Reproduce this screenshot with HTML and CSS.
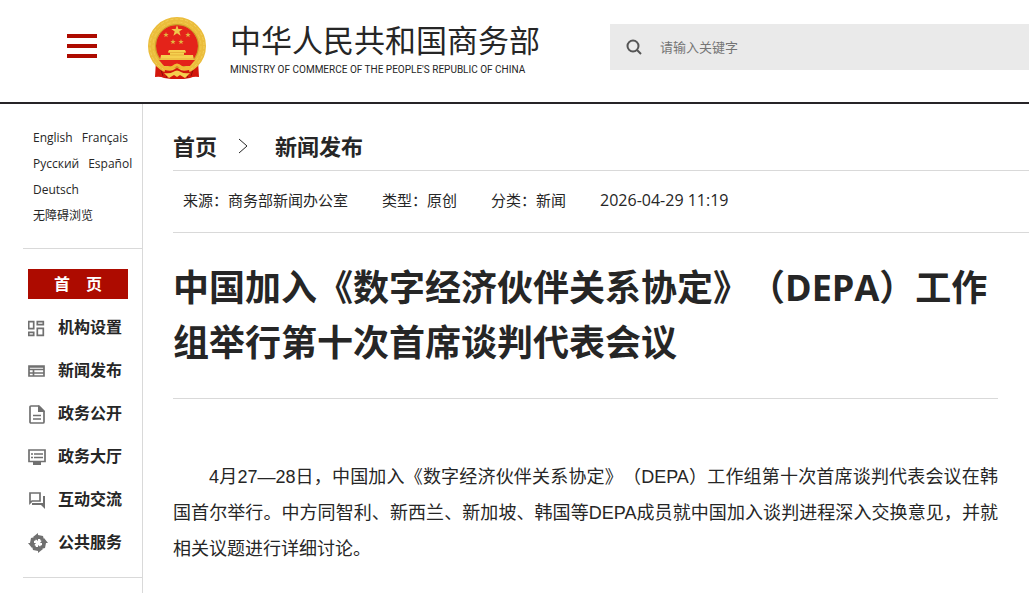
FILE: index.html
```html
<!DOCTYPE html>
<html lang="zh-CN">
<head>
    <meta charset="utf-8">
    <title>中国加入《数字经济伙伴关系协定》（DEPA）工作组举行第十次首席谈判代表会议</title>
    <link rel="stylesheet" href="styles.css">
</head>
<body>
<header class="header">
    <button class="menu-btn" type="button" aria-label="菜单"><span></span><span></span><span></span></button>
    <a class="brand" href="#">
        <svg class="emblem" viewBox="0 0 58 62" aria-hidden="true">
            <path d="M8 44L7 60Q12 59 16 61L23 62H36L42 61Q46 59 51 60L50 44Z" fill="#d3170c"/>
            <path d="M11 47L15 59M47 47L43 59M20 57L18 61M38 57L40 61" stroke="#8f0d06" stroke-width="1"/>
            <circle cx="29" cy="29" r="25" fill="#e4231a" stroke="#ebbd3c" stroke-width="8"/>
            <circle cx="29" cy="29" r="27" fill="none" stroke="#f3d05c" stroke-width="1" stroke-dasharray="3 2"/>
            <circle cx="29" cy="29" r="24" fill="none" stroke="#f2ca4c" stroke-width="1" stroke-dasharray="4 2"/>
            <circle cx="29" cy="29" r="21.500" fill="none" stroke="#b98a1c" stroke-width=".7"/>
            <path d="M29 8l1.400 4h4.300l-3.400 2.600 1.300 4.100-3.600-2.500-3.600 2.500 1.300-4.100-3.400-2.600h4.300z" fill="#f0c84c"/>
            <path id="star" d="M18 15l.7 2h2l-1.600 1.300.6 2-1.700-1.200-1.700 1.200.6-2-1.600-1.300h2z" fill="#e3b540"/>
            <use href="#star" x="22"/>
            <use href="#star" x="7" y="7"/>
            <use href="#star" x="15" y="7"/>
            <path d="M21 33h16l1 2-2 1v2h9l1 5H12l1-5h9v-2l-2-1z" fill="#f5d04f"/>
            <path d="M20 35.500h18M22 38h14M10 42h38" stroke="#dfa830" stroke-width=".7"/>
            <path d="M11 43h36l-5 6H16z" fill="#e4231a"/>
            <path d="M14 48Q20 52 24 49Q29 44 34 49Q38 52 44 48L42 53Q35 54 32 51Q29 48 26 51Q23 54 16 53Z" fill="#f0bd35"/>
            <path d="M17 53Q24 55 27 52Q29 50 31 52Q34 55 41 53L42 57H16Z" fill="#d3170c"/>
            <path d="M16 56Q22 57 25 55Q29 52 33 55Q36 57 42 56L37 61L32 58L29 60L26 58L21 61Z" fill="#f4cf4e"/>
        </svg>
        <span class="brand-text">
            <span class="brand-cn">中华人民共和国商务部</span>
            <span class="brand-en">MINISTRY OF COMMERCE OF THE PEOPLE'S REPUBLIC OF CHINA</span>
        </span>
    </a>
    <form class="search">
        <button class="search-btn" type="button" aria-label="搜索">
            <svg viewBox="0 0 16 16"><circle cx="7" cy="7" r="5.500"/><path d="M11 11l4 4"/></svg>
        </button>
        <input type="text" placeholder="请输入关键字" aria-label="请输入关键字">
    </form>
</header>

<div class="page">
    <aside class="sidebar">
        <div class="langs">
            <a href="#">English</a>
            <a href="#">Français</a>
            <a href="#">Русский</a>
            <a href="#">Español</a>
            <a href="#">Deutsch</a>
            <a href="#">无障碍浏览</a>
        </div>
        <nav class="nav">
            <a class="nav-home" href="#">首&emsp;页</a>
            <a class="nav-item" href="#">
                <svg viewBox="0 0 20 20"><path class="line" d="M.7 3.700h5v7h-5zM9.300 3.700h6v3h-6zM.7 14.300h5v3h-5zM9.300 10.300h6v7h-6z"/></svg>
                机构设置
            </a>
            <a class="nav-item" href="#">
                <svg viewBox="0 0 20 20"><path class="line" d="M1 5h15v10H1zM1 8.500h15M1 12h15M5.500 8v7M1 6h15"/></svg>
                新闻发布
            </a>
            <a class="nav-item" href="#">
                <svg viewBox="0 0 20 20"><path class="line" d="M3 2h8l5 5v11q0 1-1 1H3q-1 0-1-1V3q0-1 1-1z"/><path d="M10 1l7 7h-7z"/><path class="line" d="M5 11.500h8M5 15h8"/></svg>
                政务公开
            </a>
            <a class="nav-item" href="#">
                <svg viewBox="0 0 20 20"><path class="line" d="M1 3h16v11.500H1zM3 7h2M6 7h9M3 10.500h2M6 10.500h9"/><path d="M5 15h8v3H5z"/></svg>
                政务大厅
            </a>
            <a class="nav-item" href="#">
                <svg viewBox="0 0 20 20"><path class="line" d="M2 3h10v8H4l-2 2z"/><path d="M15 6h2v13l-4-4H4v-2h11z"/></svg>
                互动交流
            </a>
            <a class="nav-item" href="#">
                <svg viewBox="0 0 20 20">
                    <path id="blade" d="M5 4L10 0V2L15 3L16 7L13 8L12 6L10 6V8Z"/>
                    <use href="#blade" transform="rotate(90 10 10)"/>
                    <use href="#blade" transform="rotate(180 10 10)"/>
                    <use href="#blade" transform="rotate(270 10 10)"/>
                </svg>
                公共服务
            </a>
        </nav>
    </aside>

    <main class="content">
        <div class="crumbs">
            <a href="#">首页</a>
            <svg viewBox="0 0 10 16" aria-hidden="true"><path d="M1 1l8 7-8 7"/></svg>
            <a href="#">新闻发布</a>
        </div>
        <div class="meta">
            <span>来源：商务部新闻办公室</span>
            <span>类型：原创</span>
            <span>分类：新闻</span>
            <time>2026-04-29 11:19</time>
        </div>
        <article class="article">
            <h1>中国加入《数字经济伙伴关系协定》（DEPA）工作组举行第十次首席谈判代表会议</h1>
            <p>4月27—28日，中国加入《数字经济伙伴关系协定》（DEPA）工作组第十次首席谈判代表会议在韩国首尔举行。中方同智利、新西兰、新加坡、韩国等DEPA成员就中国加入谈判进程深入交换意见，并就相关议题进行详细讨论。</p>
        </article>
    </main>
</div>
</body>
</html>
```
FILE: styles.css
```css
* {
    box-sizing: border-box;
}
body {
    margin: 0;
    background: #fff;
    color: #262626;
    font-family: "Open Sans", "Noto Sans CJK SC", sans-serif;
    text-spacing-trim: space-all;
}
a {
    color: inherit;
    text-decoration: none;
}
button {
    padding: 0;
    border: 0;
    background: none;
    cursor: pointer;
}

/* header */
.header {
    display: grid;
    grid-template-columns: 30px 411px 1fr;
    column-gap: 51px;
    align-items: center;
    height: 104px;
    padding: 0 0 8px 67px;
    border-bottom: 2px solid #262427;
}
.menu-btn {
    display: flex;
    flex-direction: column;
    gap: 6px;
    padding-bottom: 2px;
}
.menu-btn span {
    width: 30px;
    height: 4px;
    background: #ad0b00;
}
.brand {
    display: flex;
    align-items: center;
    gap: 24px;
    padding-top: 2px;
    white-space: nowrap;
}
.emblem {
    flex: none;
    width: 58px;
    height: 62px;
}
.brand-text {
    display: flex;
    flex-direction: column;
}
.brand-cn {
    font-size: 31px;
    line-height: 44px;
}
.brand-en {
    font-family: Roboto, "Liberation Sans", sans-serif;
    font-size: 10px;
    line-height: 16px;
}
.search {
    display: flex;
    align-items: center;
    height: 46px;
    padding-left: 16px;
    background: #eaeaea;
}
.search-btn {
    width: 16px;
    height: 16px;
}
.search-btn svg {
    display: block;
    fill: none;
    stroke: #555;
    stroke-width: 2;
}
.search input {
    flex: 1;
    min-width: 0;
    height: 46px;
    padding: 0 18px;
    border: 0;
    outline: 0;
    background: none;
    font: 13px "Open Sans", "Noto Sans CJK SC", sans-serif;
}
.search input::placeholder {
    color: #757575;
}

.page {
    display: flex;
    min-height: calc(100vh - 104px);
}

/* sidebar */
.sidebar {
    flex: none;
    width: 143px;
    padding-left: 23px;
    border-right: 1px solid #d9d9d9;
}
.langs {
    display: flex;
    flex-wrap: wrap;
    column-gap: 9px;
    padding: 21px 0 19px 10px;
    border-bottom: 1px solid #d9d9d9;
    font-size: 12px;
    line-height: 26px;
}
.nav {
    padding: 20px 14px 13px 5px;
    border-bottom: 1px solid #d9d9d9;
    font-size: 16px;
    font-weight: bold;
}
.nav-home {
    display: block;
    margin-bottom: 7px;
    background: #ad0b00;
    color: #fff;
    line-height: 30px;
    text-align: center;
}
.nav-item {
    display: flex;
    align-items: center;
    gap: 10px;
    line-height: 43px;
    white-space: nowrap;
}
.nav-item svg {
    width: 20px;
    height: 20px;
    fill: #707070;
}
.nav-item .line {
    fill: none;
    stroke: #707070;
    stroke-width: 1.7;
}

/* article */
.content {
    flex: 1;
    min-width: 0;
    padding-left: 30px;
}
.crumbs {
    display: flex;
    align-items: center;
    padding: 21px 0 3px;
    border-bottom: 1px solid #d9d9d9;
    font-size: 22px;
    font-weight: bold;
    line-height: 42px;
}
.crumbs svg {
    width: 10px;
    height: 16px;
    margin: 0 27px 0 21px;
    fill: none;
    stroke: #262626;
}
.meta {
    display: flex;
    flex-wrap: wrap;
    gap: 0 34px;
    padding: 0 10px 2px;
    border-bottom: 1px solid #d9d9d9;
    font-size: 15px;
    line-height: 59px;
}
.meta time {
    font-size: 16px;
}
.article {
    margin-right: 31px;
}
.article h1 {
    margin: 0;
    padding: 27px 0 28px;
    border-bottom: 1px solid #d9d9d9;
    font-size: 36px;
    line-height: 55px;
}
.article p {
    margin: 60px 0 0;
    font-family: "Liberation Sans", "Noto Sans CJK SC", sans-serif;
    font-size: 18px;
    line-height: 36px;
    text-align: justify;
    text-indent: 2em;
}
```
